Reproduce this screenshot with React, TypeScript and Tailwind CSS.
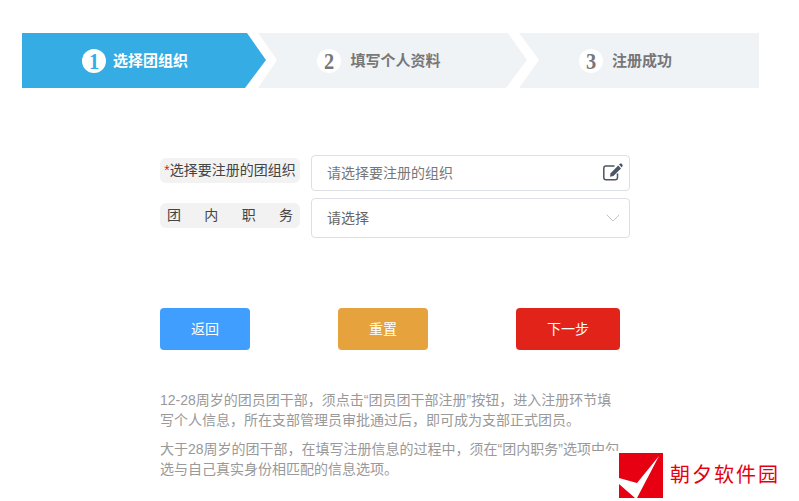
import React from "react";
import { ChevronDown } from "lucide-react";

const cjk = "font-['Liberation_Sans','Noto_Sans_CJK_SC',sans-serif]";

type StepProps = {
  num: number;
  label: string;
  active?: boolean;
  className: string;
};

const Step: React.FC<StepProps> = ({ num, label, active, className }) => (
  <div
    className={`h-[55px] flex items-center justify-center ${
      active ? "bg-[#35ade4] text-white" : "bg-[#f0f3f6] text-[#777777]"
    } ${className}`}
  >
    <span
      className={`w-6 h-6 mt-px rounded-full bg-white flex items-center justify-center font-['Liberation_Serif',serif] font-bold text-[24px] leading-none ${
        active ? "text-[#35ade4]" : "text-[#777777]"
      }`}
    >
      <span className="inline-block scale-x-[0.85]">{num}</span>
    </span>
    <span className="text-[15px] font-bold mt-px">{label}</span>
  </div>
);

const EditIcon = () => (
  <svg className="mb-[3px]" width="20" height="18" viewBox="0 0 20 18" fill="none">
    <path
      d="M14.5 10.5V14.5C14.5 15.9 13.6 16.8 12.2 16.8H3C1.6 16.8 0.8 15.9 0.8 14.5V5.2C0.8 3.8 1.6 3 3 3H11.5"
      stroke="#4a5565"
      strokeWidth="1.5"
    />
    <path d="M15.2 2.6L18 5.4L10.4 13L7 13.7L7.6 10.2Z" fill="#4a5565" />
    <path d="M16 1.6L17.2 0.6C17.6 0.3 18 0.3 18.4 0.6L19.5 1.7C19.8 2.1 19.8 2.5 19.5 2.9L18.8 4.5Z" fill="#4a5565" />
  </svg>
);

export default function App() {
  return (
    <div className={`relative w-[799px] h-[501px] overflow-hidden bg-white ${cjk}`}>
      <div className="flex pt-[33px] pl-[22px]">
        <Step
          num={1}
          label="选择团组织"
          active
          className="w-[244px] gap-[7px] pr-[18px] [clip-path:polygon(0_0,225px_0,244px_27px,223px_55px,0_55px)]"
        />
        <Step
          num={2}
          label="填写个人资料"
          className="w-[269px] gap-[9px] ml-[-8px] pr-[27px] [clip-path:polygon(0_0,250px_0,269px_27px,248px_55px,0_55px,19px_27px)]"
        />
        <Step
          num={3}
          label="注册成功"
          className="w-[240px] gap-[9px] ml-[-8px] pr-[27px] [clip-path:polygon(0_0,240px_0,240px_55px,0_55px,20px_27px)]"
        />
      </div>

      <div className="w-[470px] ml-[160px] mt-[67px] flex flex-col gap-[7px]">
        <div className="flex gap-[11px] items-start">
          <label className="w-[140px] h-[25px] mt-[3px] rounded-md bg-[#f2f2f2] text-sm leading-[24px] text-[#444444] text-center whitespace-nowrap">
            <span className="text-[#e2231a]">*</span>选择要注册的团组织
          </label>
          <div className="flex-1 h-9 rounded border border-[#dcdfe6] flex items-center justify-between pl-[15px] pr-[6px] text-sm text-[#777777]">
            <span>请选择要注册的组织</span>
            <EditIcon />
          </div>
        </div>
        <div className="flex gap-[11px] items-start">
          <label className="w-[140px] h-[25px] mt-[5px] rounded-md bg-[#f2f2f2] px-[7px] text-sm leading-[25px] text-[#444444] flex justify-between">
            <span>团</span>
            <span>内</span>
            <span>职</span>
            <span>务</span>
          </label>
          <div className="flex-1 h-10 rounded border border-[#dcdfe6] flex items-center justify-between pl-[15px] pr-[4px] text-sm text-[#666666]">
            <span>请选择</span>
            <ChevronDown className="w-6 h-6 text-[#c0c4cc]" strokeWidth={1} />
          </div>
        </div>
      </div>

      <div className="flex ml-[160px] mt-[70px] w-[460px] justify-between text-sm text-white">
        <button className="w-[90px] h-[42px] rounded bg-[#409eff]">返回</button>
        <button className="w-[90px] h-[42px] rounded bg-[#e6a23c]">重置</button>
        <button className="w-[104px] h-[42px] rounded bg-[#e2231a]">下一步</button>
      </div>

      <div className="ml-[160px] mt-[40px] w-[460px] text-sm leading-[20px] text-[#999999]">
        <p>12-28周岁的团员团干部，须点击“团员团干部注册”按钮，进入注册环节填写个人信息，所在支部管理员审批通过后，即可成为支部正式团员。</p>
        <p className="mt-[9px]">大于28周岁的团干部，在填写注册信息的过程中，须在“团内职务”选项中勾选与自己真实身份相匹配的信息选项。</p>
      </div>

      {/* watermark sits over the last text line */}
      <div className="absolute left-[590px] top-[451px] w-[209px] h-[50px] bg-white flex items-start pl-[29px] pt-[2px] gap-[7px]">
        <svg width="44" height="45" viewBox="0 0 44 45" className="shrink-0">
          <rect width="44" height="45" fill="#e60012" />
          <path d="M0 25 L18 30 L40 3 L18 45 L16 45 L0 31 Z" fill="#ffffff" />
        </svg>
        <span className="mt-[9px] text-[20px] leading-[26px] tracking-[2px] whitespace-nowrap text-[#e60012]">朝夕软件园</span>
      </div>
    </div>
  );
}
